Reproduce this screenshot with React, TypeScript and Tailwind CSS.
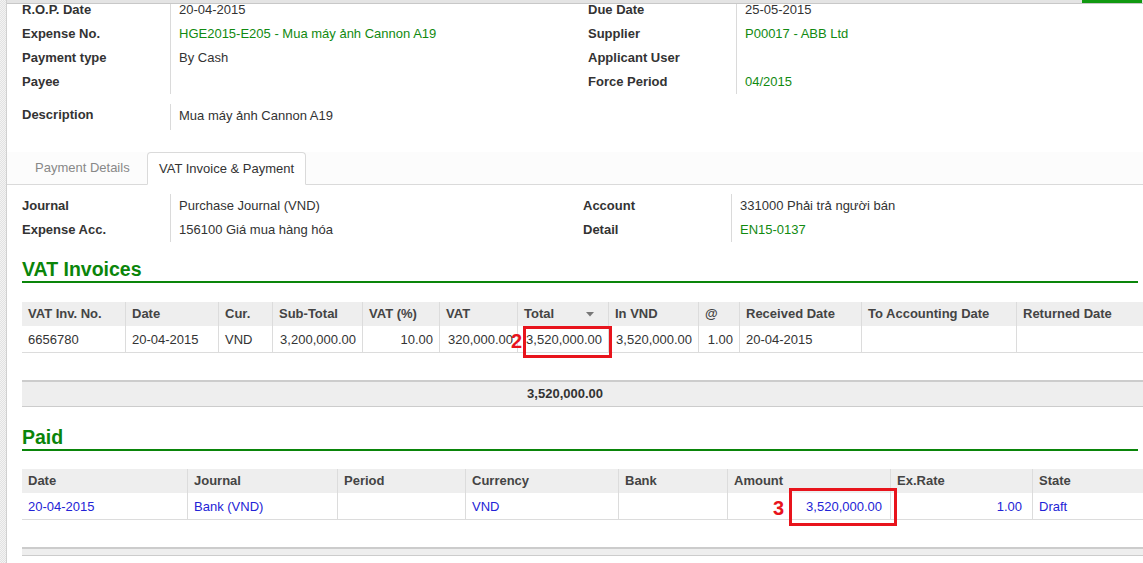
import React from "react";

const G = "text-[#118a11]";

function Field({ label }: { label: string }) {
  return <div className="h-6 leading-6 font-bold text-[#333]">{label}</div>;
}
function Val({ v, green }: { v: string; green?: boolean }) {
  return <div className={`h-6 leading-6 ${green ? G : "text-[#333]"}`}>{v}</div>;
}

function Tri() {
  return (
    <svg width="8" height="5" viewBox="0 0 8 5" className="mr-[8px]">
      <polygon points="0,0 8,0 4,4.5" fill="#777" />
    </svg>
  );
}

export default function App() {
  const hc = "h-6 leading-6 px-[6px] font-bold text-[#444] border-r border-[#dcdcdc] whitespace-nowrap overflow-hidden";
  const dc = "h-[26px] leading-[28px] px-[6px] text-[#333] border-r border-[#dcdcdc] whitespace-nowrap overflow-hidden";
  const dcr = dc + " text-right";
  const bl = "h-[26px] leading-[28px] px-[6px] text-[#2323d6] border-r border-[#dcdcdc] whitespace-nowrap";
  const blr = bl + " text-right pr-[8px]";
  return (
    <div className="w-[1143px] h-[563px] overflow-hidden flex bg-white text-[13px] font-['Liberation_Sans',Arial,sans-serif]">
      <div className="w-[6px] shrink-0 bg-[#ececec] bg-[repeating-conic-gradient(#e2e2e2_0_25%,#f3f3f3_0_50%)] bg-[length:2px_2px]" />
      <div className="flex-1 border-l border-[#d0d0d0] flex flex-col min-w-0">
        {/* top strip */}
        <div className="relative z-10 h-[4px] flex border-b border-[#c8c8c8] bg-[#e4e4e4]">
          <div className="flex-1" />
          <div className="w-[60px] bg-[#119911] mr-[1px]" />
        </div>

        {/* header form */}
        <div className="-mt-[6px] pl-[15px] flex">
          <div className="w-[566px] flex">
            <div className="w-[148px]">
              <Field label="R.O.P. Date" />
              <Field label="Expense No." />
              <Field label="Payment type" />
              <Field label="Payee" />
            </div>
            <div className="flex-1 border-l border-[#dadada] pl-[8px]">
              <Val v="20-04-2015" />
              <Val v="HGE2015-E205 - Mua máy ảnh Cannon A19" green />
              <Val v="By Cash" />
              <Val v="" />
            </div>
          </div>
          <div className="flex-1 flex">
            <div className="w-[148px]">
              <Field label="Due Date" />
              <Field label="Supplier" />
              <Field label="Applicant User" />
              <Field label="Force Period" />
            </div>
            <div className="flex-1 border-l border-[#dadada] pl-[8px]">
              <Val v="25-05-2015" />
              <Val v="P00017 - ABB Ltd" green />
              <Val v="" />
              <Val v="04/2015" green />
            </div>
          </div>
        </div>
        <div className="mt-[10px] pl-[15px] flex h-[26px]">
          <div className="w-[148px] leading-[22px] font-bold text-[#333]">Description</div>
          <div className="border-l border-[#dadada] pl-[8px] leading-[24px] text-[#333]">Mua máy ảnh Cannon A19</div>
        </div>

        {/* tabs */}
        <div className="mt-[22px] h-[33px] pl-[15px] flex items-end border-b border-[#dadada] bg-[#fcfcfc]">
          <div className="h-[32px] leading-[32px] px-[13px] text-[#888] w-[125px]">Payment Details</div>
          <div className="h-[33px] leading-[32px] px-[11px] text-[#333] bg-white border border-[#dadada] border-b-white rounded-t-[4px] -mb-px">
            VAT Invoice &amp; Payment
          </div>
        </div>

        {/* journal form */}
        <div className="mt-[9px] pl-[15px] flex">
          <div className="w-[561px] flex">
            <div className="w-[148px]">
              <Field label="Journal" />
              <Field label="Expense Acc." />
            </div>
            <div className="flex-1 border-l border-[#dadada] pl-[8px]">
              <Val v="Purchase Journal (VND)" />
              <Val v="156100 Giá mua hàng hóa" />
            </div>
          </div>
          <div className="flex-1 flex">
            <div className="w-[148px]">
              <Field label="Account" />
              <Field label="Detail" />
            </div>
            <div className="flex-1 border-l border-[#dadada] pl-[8px]">
              <Val v="331000 Phải trả người bán" />
              <Val v="EN15-0137" green />
            </div>
          </div>
        </div>

        {/* VAT Invoices */}
        <div className="mt-[15px] ml-[15px] mr-[5px] h-[26px] leading-[24px] border-b-2 border-[#0a850a] text-[19.5px] font-bold text-[#0a850a]">
          VAT Invoices
        </div>
        <div className="relative mt-[19px] ml-[15px]">
          <div className="grid grid-cols-[104px_93px_54px_90px_77px_78px_91px_90px_41px_122px_155px_1fr] bg-[#eeeeee]">
            <div className={hc}>VAT Inv. No.</div>
            <div className={hc}>Date</div>
            <div className={hc}>Cur.</div>
            <div className={hc}>Sub-Total</div>
            <div className={hc}>VAT (%)</div>
            <div className={hc}>VAT</div>
            <div className={hc + " flex items-center justify-between"}>
              <span>Total</span>
              <Tri />
            </div>
            <div className={hc}>In VND</div>
            <div className={hc}>@</div>
            <div className={hc}>Received Date</div>
            <div className={hc}>To Accounting Date</div>
            <div className={hc + " border-r-0"}>Returned Date</div>
          </div>
          <div className="grid grid-cols-[104px_93px_54px_90px_77px_78px_91px_90px_41px_122px_155px_1fr] border-b border-[#dcdcdc]">
            <div className={dc}>6656780</div>
            <div className={dc}>20-04-2015</div>
            <div className={dc}>VND</div>
            <div className={dcr}>3,200,000.00</div>
            <div className={dcr}>10.00</div>
            <div className={dc + " pl-[8px]"}>320,000.00</div>
            <div className={dcr}>3,520,000.00</div>
            <div className={dcr}>3,520,000.00</div>
            <div className={dcr}>1.00</div>
            <div className={dc}>20-04-2015</div>
            <div className={dc}></div>
            <div className={dc + " border-r-0"}></div>
          </div>
          <div className="absolute left-[489px] top-[24px] leading-[30px] text-[20px] font-bold text-[#e8141c]">2</div>
          <div className="absolute left-[501px] top-[24px] w-[89px] h-[32px] border-[3px] border-[#e8141c]" />
          <div className="mt-[27px] grid grid-cols-[104px_93px_54px_90px_77px_78px_91px_90px_41px_122px_155px_1fr] bg-[#eeeeee] border-t-2 border-b border-[#cccccc]">
            <div className="h-6" />
            <div />
            <div />
            <div />
            <div />
            <div />
            <div className="h-6 leading-6 pr-[6px] text-right font-bold text-[#333]">3,520,000.00</div>
          </div>
        </div>

        {/* Paid */}
        <div className="mt-[18px] ml-[15px] mr-[5px] h-[26px] leading-[24px] border-b-2 border-[#0a850a] text-[19.5px] font-bold text-[#0a850a]">
          Paid
        </div>
        <div className="relative mt-[18px] ml-[15px]">
          <div className="grid grid-cols-[166px_150px_128px_153px_109px_163px_142px_1fr] bg-[#eeeeee]">
            <div className={hc}>Date</div>
            <div className={hc}>Journal</div>
            <div className={hc}>Period</div>
            <div className={hc}>Currency</div>
            <div className={hc}>Bank</div>
            <div className={hc}>Amount</div>
            <div className={hc}>Ex.Rate</div>
            <div className={hc + " border-r-0"}>State</div>
          </div>
          <div className="grid grid-cols-[166px_150px_128px_153px_109px_163px_142px_1fr] border-b border-[#dcdcdc]">
            <div className={bl}>20-04-2015</div>
            <div className={bl}>Bank (VND)</div>
            <div className={bl}></div>
            <div className={bl}>VND</div>
            <div className={bl}></div>
            <div className={blr}>3,520,000.00</div>
            <div className={blr + " pr-[10px]"}>1.00</div>
            <div className={bl + " border-r-0"}>Draft</div>
          </div>
          <div className="absolute left-[751px] top-[24px] leading-[30px] text-[20px] font-bold text-[#e8141c]">3</div>
          <div className="absolute left-[767px] top-[19px] w-[108px] h-[38px] border-[3px] border-[#e8141c]" />
          <div className="mt-[27px] h-[9px] bg-[#eeeeee] border-t-2 border-b border-[#cccccc]" />
        </div>
      </div>
    </div>
  );
}
